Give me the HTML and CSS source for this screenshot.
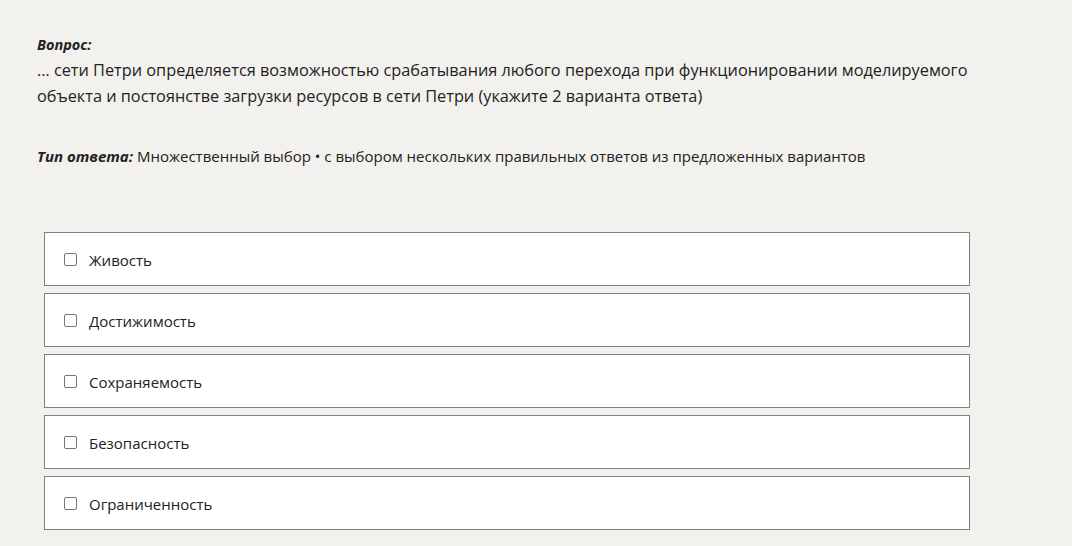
FILE: index.html
```html
<!DOCTYPE html>
<html lang="ru">
<head>
<meta charset="utf-8">
<link rel="stylesheet" href="styles.css">
</head>
<body>
<main class="page">
  <section class="question">
    <div class="label">Вопрос:</div>
    <p class="text">… сети Петри определяется возможностью срабатывания любого перехода при функционировании моделируемого объекта и постоянстве загрузки ресурсов в сети Петри (укажите 2 варианта ответа)</p>
  </section>
  <p class="type"><span class="label">Тип ответа:</span> Множественный выбор • с выбором нескольких правильных ответов из предложенных вариантов</p>
  <ul class="options">
    <li class="option"><span class="box"></span><span>Живость</span></li>
    <li class="option"><span class="box"></span><span>Достижимость</span></li>
    <li class="option"><span class="box"></span><span>Сохраняемость</span></li>
    <li class="option"><span class="box"></span><span>Безопасность</span></li>
    <li class="option"><span class="box"></span><span>Ограниченность</span></li>
  </ul>
</main>
</body>
</html>
```
FILE: styles.css
```css
html, body {
  margin: 0;
  background: #f2f1ee;
}
body {
  font-family: "Open Sans", "Noto Sans", sans-serif;
  color: #222;
}
.page {
  padding: 34px 0 0 37px;
  width: 950px;
}
.question .label {
  font-weight: 700;
  font-style: italic;
  font-size: 14.5px;
  line-height: 22px;
}
.question .text {
  margin: 0;
  padding-top: 1px;
  font-size: 16.3px;
  line-height: 26px;
}
.type {
  margin: 36px 0 0;
  font-size: 15px;
  line-height: 22px;
}
.type .label {
  font-weight: 700;
  font-style: italic;
}
.options {
  list-style: none;
  margin: 65px 0 0 7px;
  padding: 0;
  width: 926px;
  display: flex;
  flex-direction: column;
  gap: 7px;
}
.option {
  box-sizing: border-box;
  height: 54px;
  border: 1px solid #808080;
  background: #fff;
  display: flex;
  align-items: center;
  padding: 1px 0 0 19px;
  font-size: 15px;
  gap: 12px;
}
.box {
  width: 11px;
  height: 11px;
  border: 1px solid #767676;
  border-radius: 2px;
  background: #fff;
  flex: none;
}
```
